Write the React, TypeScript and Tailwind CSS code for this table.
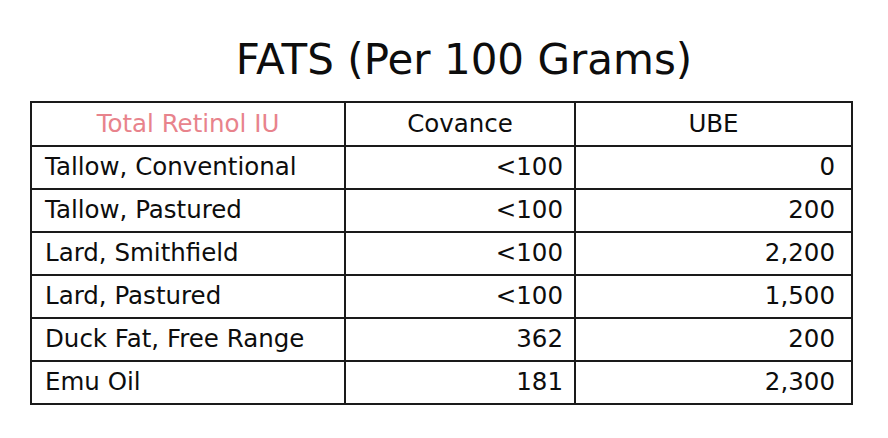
const rows = [
  { name: "Tallow, Conventional", covance: "<100", ube: "0" },
  { name: "Tallow, Pastured", covance: "<100", ube: "200" },
  { name: "Lard, Smithfield", covance: "<100", ube: "2,200" },
  { name: "Lard, Pastured", covance: "<100", ube: "1,500" },
  { name: "Duck Fat, Free Range", covance: "362", ube: "200" },
  { name: "Emu Oil", covance: "181", ube: "2,300" },
];

export default function App() {
  return (
    <div
      className="h-[438px] w-[888px] bg-white text-[#0d0d0d]"
      style={{ fontFamily: '"DejaVu Sans", "Liberation Sans", sans-serif' }}
    >
      <h1 className="pl-[40px] pt-[33px] text-center text-[42px] leading-[53px]">
        FATS (Per 100 Grams)
      </h1>
      <table className="ml-[30px] mt-[15px] w-[823px] border-collapse text-[24.5px]">
        <colgroup>
          <col className="w-[314px]" />
          <col className="w-[230px]" />
          <col />
        </colgroup>
        <thead>
          <tr className="h-[44px]">
            <th className="border-2 border-[#1a1a1a] text-center font-normal text-[#e8838c]">
              Total Retinol IU
            </th>
            <th className="border-2 border-[#1a1a1a] text-center font-normal">Covance</th>
            <th className="border-2 border-[#1a1a1a] text-center font-normal">UBE</th>
          </tr>
        </thead>
        <tbody>
          {rows.map((r) => (
            <tr key={r.name} className="h-[43px]">
              <td className="border-2 border-[#1a1a1a] pl-[13px]">{r.name}</td>
              <td className="border-2 border-[#1a1a1a] pr-[11px] text-right">{r.covance}</td>
              <td className="border-2 border-[#1a1a1a] pr-[16px] text-right">{r.ube}</td>
            </tr>
          ))}
        </tbody>
      </table>
    </div>
  );
}
